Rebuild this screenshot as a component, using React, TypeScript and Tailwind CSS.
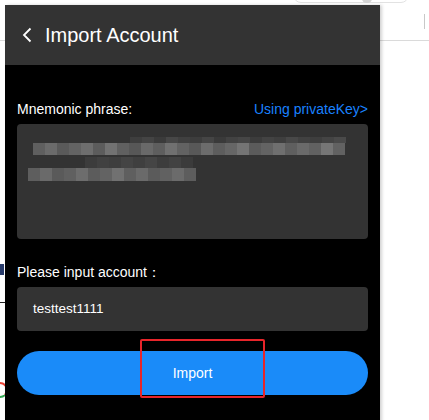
import React from 'react';

// pixelated redaction over the mnemonic words
const ROW_ONE = [
  'bg-[#5f5f5f]', 'bg-[#6b6b6b]', 'bg-[#5a5a5a]', 'bg-[#636363]', 'bg-[#6e6e6e]', 'bg-[#5c5c5c]',
  'bg-[#727272]', 'bg-[#606060]', 'bg-[#575757]', 'bg-[#696969]', 'bg-[#5e5e5e]', 'bg-[#707070]',
  'bg-[#626262]', 'bg-[#585858]', 'bg-[#6c6c6c]', 'bg-[#5d5d5d]', 'bg-[#666666]', 'bg-[#747474]',
  'bg-[#5b5b5b]', 'bg-[#636363]', 'bg-[#6f6f6f]', 'bg-[#5f5f5f]', 'bg-[#6a6a6a]', 'bg-[#616161]',
  'bg-[#767676]', 'bg-[#626262]',
];
const ROW_ONE_TOP = [
  'bg-[#3e3e3e]', 'bg-[#444444]', 'bg-[#3b3b3b]', 'bg-[#474747]', 'bg-[#404040]', 'bg-[#3d3d3d]',
  'bg-[#454545]', 'bg-[#3a3a3a]', 'bg-[#424242]', 'bg-[#464646]', 'bg-[#3c3c3c]', 'bg-[#434343]',
  'bg-[#3f3f3f]', 'bg-[#484848]', 'bg-[#414141]', 'bg-[#3e3e3e]', 'bg-[#444444]', 'bg-[#4a4a4a]',
];
const ROW_TWO = [
  'bg-[#5e5e5e]', 'bg-[#6a6a6a]', 'bg-[#5a5a5a]', 'bg-[#606060]', 'bg-[#6d6d6d]', 'bg-[#5c5c5c]',
  'bg-[#636363]', 'bg-[#717171]', 'bg-[#5f5f5f]', 'bg-[#6a6a6a]', 'bg-[#5b5b5b]', 'bg-[#616161]',
  'bg-[#6b6b6b]', 'bg-[#5d5d5d]',
];
const ROW_TWO_TOP = [
  'bg-[#3c3c3c]', 'bg-[#414141]', 'bg-[#3e3e3e]', 'bg-[#444444]', 'bg-[#3f3f3f]', 'bg-[#454545]',
  'bg-[#3d3d3d]', 'bg-[#424242]', 'bg-[#3b3b3b]',
];

function Mosaic() {
  return (
    <div className="flex flex-col pt-[13px]">
      <div className="flex h-[6px] pl-[113px]">
        {ROW_ONE_TOP.map((c, i) => (
          <div key={i} className={`w-[12px] h-full ${c}`} />
        ))}
      </div>
      <div className="flex h-[12px] pl-[16px]">
        {ROW_ONE.map((c, i) => (
          <div key={i} className={`w-[12px] h-full ${c}`} />
        ))}
      </div>
      <div className="flex h-[11px] pl-[68px] mt-[2px]">
        {ROW_TWO_TOP.map((c, i) => (
          <div key={i} className={`w-[12px] h-full ${c}`} />
        ))}
      </div>
      <div className="flex h-[13px] pl-[11px]">
        {ROW_TWO.map((c, i) => (
          <div key={i} className={`w-[12px] h-full ${c}`} />
        ))}
      </div>
    </div>
  );
}

export default function App() {
  return (
    <div className="relative w-[429px] h-[420px] bg-white overflow-hidden font-['Liberation_Sans',Arial,sans-serif]">
      {/* browser page peeking behind the popup */}
      <div className="absolute left-0 right-0 top-[40px] h-px bg-[#dadada]" />
      <div className="absolute left-[293px] top-[-12px] w-[116px] h-[15px] rounded-b-[8px] border border-[#e2e2e2]" />
      <div className="absolute left-[362px] top-[-6px] w-[10px] h-[9px] rounded-full bg-[#d4d4d4]" />
      <div className="absolute left-[424px] top-[14px] w-px h-[15px] bg-[#c8c8c8]" />
      <div className="absolute left-0 top-[264px] w-[4px] h-[11px] bg-[#273a6a]" />
      <div className="absolute left-0 top-[302px] w-[5px] h-px bg-[#222222]" />
      <div className="absolute left-[-8px] top-[382px] w-[16px] h-[16px] rounded-full border-[2px] border-t-[#e94235] border-r-[#e94235] border-b-[#34a853] border-l-[#fbbc05]" />

      {/* popup */}
      <div className="absolute left-[5px] top-[5px] w-[375px] h-[420px] bg-black shadow-[2px_0_3px_rgba(0,0,0,0.18)] flex flex-col">
        <div className="h-[60px] bg-[#333333] flex items-center pl-[15px] shrink-0">
          <svg width="16" height="16" viewBox="0 0 16 16" className="mr-[9px]">
            <path d="M10.5 1.5 L4 8 L10.5 14.5" fill="none" stroke="white" strokeWidth="1.8" />
          </svg>
          <span className="text-white text-[20px] leading-none">Import Account</span>
        </div>

        <div className="px-[12px] pt-[34px]">
          <div className="flex items-center justify-between h-[20px] text-[14px]">
            <span className="text-white">Mnemonic phrase:</span>
            <span className="text-[#1a82ff]">Using privateKey&gt;</span>
          </div>
          <div className="mt-[5px] h-[115px] rounded-[4px] bg-[#333333]">
            <Mosaic />
          </div>

          <div className="mt-[23px] h-[20px] flex items-center text-white text-[14px]">
            Please input account：
          </div>
          <div className="mt-[5px] h-[44px] rounded-[4px] bg-[#333333] flex items-center pl-[16px] text-white text-[13.5px]">
            testtest1111
          </div>

          <div className="relative mt-[20px]">
            <button className="w-full h-[44px] rounded-full bg-[#1a8bf9] text-white text-[14px]">
              Import
            </button>
            <div className="absolute left-[123px] top-[-12px] w-[125px] h-[59px] border-[2px] border-[#e8252a] rounded-[2px]" />
          </div>
        </div>
      </div>
    </div>
  );
}
